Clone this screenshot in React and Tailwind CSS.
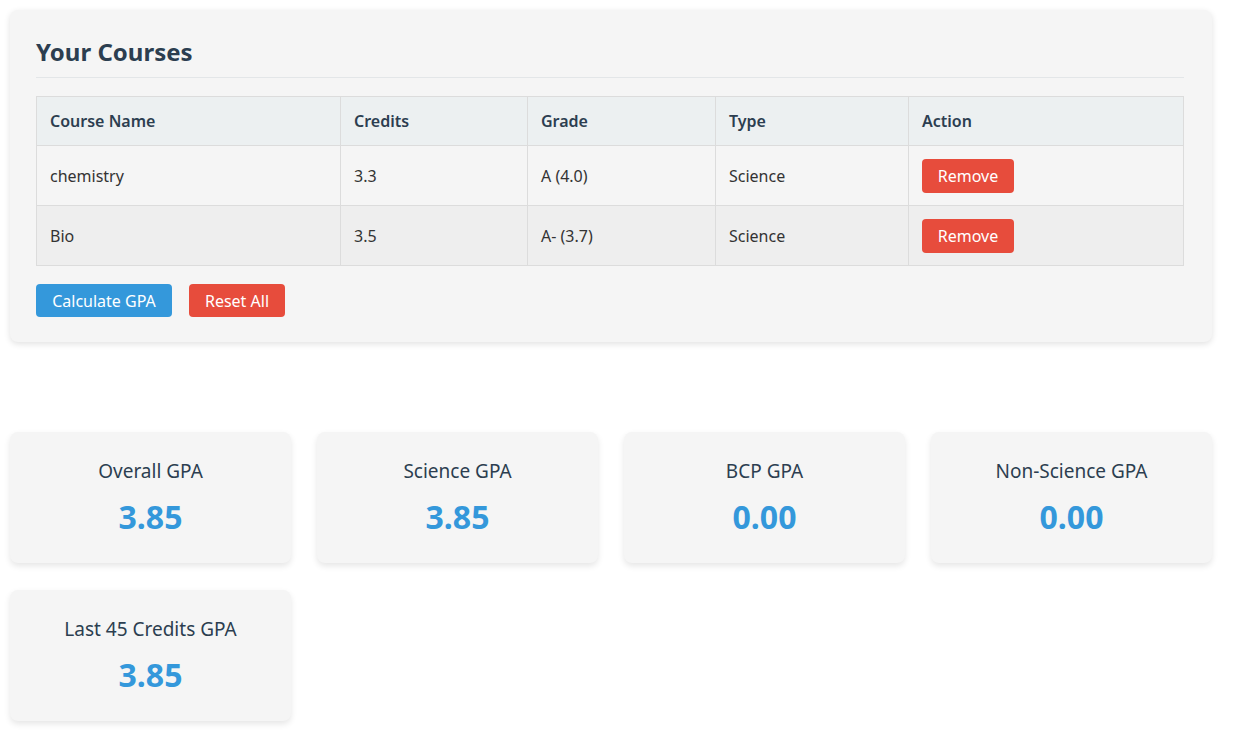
export default function App() {
  const courses = [
    { name: "chemistry", credits: "3.3", grade: "A (4.0)", type: "Science" },
    { name: "Bio", credits: "3.5", grade: "A- (3.7)", type: "Science" },
  ];
  const stats = [
    ["Overall GPA", "3.85"],
    ["Science GPA", "3.85"],
    ["BCP GPA", "0.00"],
    ["Non-Science GPA", "0.00"],
    ["Last 45 Credits GPA", "3.85"],
  ];
  return (
    <div className="min-h-[750px] bg-white pt-[10px] pl-[10px] text-[#333]" style={{ fontFamily: '"Noto Sans", "Open Sans", sans-serif' }}>
      <div className="w-[1202px]">
        <div className="rounded-lg bg-[#f5f5f5] pl-[26px] pr-[28px] pt-[26px] pb-[25px] shadow-[0_2px_6px_rgba(0,0,0,0.12)]">
          <h2 className="border-b border-[#e3e6e8] pb-[9px] text-[24px] font-bold leading-[32px] text-[#2c3e50]">Your Courses</h2>
          <table className="mt-[18px] w-full border-collapse text-[16px]">
            <thead>
              <tr className="bg-[#ecf0f1] text-left">
                <th className="h-[49px] w-[304px] border border-[#dcdcdc] px-[13px] font-semibold text-[#2c3e50]">Course Name</th>
                <th className="w-[187px] border border-[#dcdcdc] px-[13px] font-semibold text-[#2c3e50]">Credits</th>
                <th className="w-[188px] border border-[#dcdcdc] px-[13px] font-semibold text-[#2c3e50]">Grade</th>
                <th className="w-[193px] border border-[#dcdcdc] px-[13px] font-semibold text-[#2c3e50]">Type</th>
                <th className="border border-[#dcdcdc] px-[13px] font-semibold text-[#2c3e50]">Action</th>
              </tr>
            </thead>
            <tbody>
              {courses.map((c, i) => (
                <tr key={i} className={i % 2 === 1 ? "bg-[#eeeeee]" : "bg-[#f5f5f5]"}>
                  <td className="h-[60px] border border-[#dcdcdc] px-[13px] text-[#333]">{c.name}</td>
                  <td className="border border-[#dcdcdc] px-[13px]">{c.credits}</td>
                  <td className="border border-[#dcdcdc] px-[13px]">{c.grade}</td>
                  <td className="border border-[#dcdcdc] px-[13px]">{c.type}</td>
                  <td className="border border-[#dcdcdc] px-[13px]">
                    <button className="h-[34px] w-[92px] rounded-[4px] bg-[#e74c3c] text-[16px] text-white">Remove</button>
                  </td>
                </tr>
              ))}
            </tbody>
          </table>
          <div className="mt-[18px] flex gap-[17px]">
            <button className="h-[33px] w-[136px] rounded-[4px] bg-[#3498db] text-[16px] text-white">Calculate GPA</button>
            <button className="h-[33px] w-[96px] rounded-[4px] bg-[#e74c3c] text-[16px] text-white">Reset All</button>
          </div>
        </div>
        <div className="mt-[90px] grid grid-cols-4 gap-x-[26px] gap-y-[27px]">
          {stats.map(([l, v]) => (
            <div key={l} className="flex h-[131px] flex-col items-center justify-center rounded-lg bg-[#f5f5f5] shadow-[0_3px_6px_rgba(0,0,0,0.1)]">
              <div className="text-[19px] leading-[26px] text-[#2c3e50]">{l}</div>
              <div className="mt-[13px] text-[32px] font-bold leading-[40px] text-[#3498db]">{v}</div>
            </div>
          ))}
        </div>
      </div>
    </div>
  );
}
